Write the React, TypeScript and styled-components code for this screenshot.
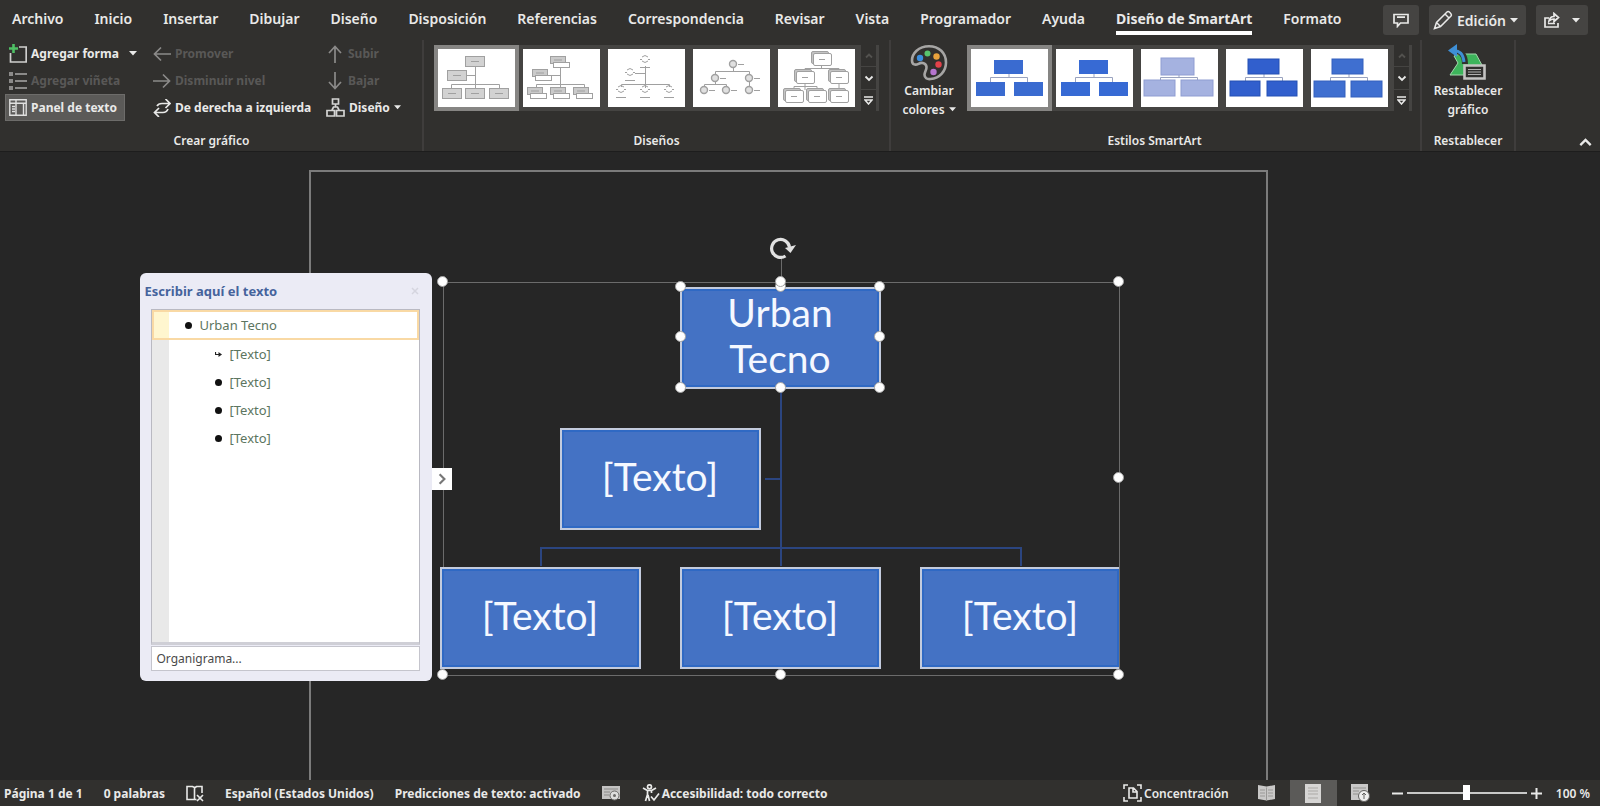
import React from "react";
import styled, { createGlobalStyle, css } from "styled-components";

const c = {
  bar: "#31302e",
  canvas: "#262626",
  text: "#e9e9e8",
  dim: "#595857",
  line: "#3f3d3c",
  blue: "#4472c4",
};

const GlobalStyle = createGlobalStyle`
  *, *::before, *::after { box-sizing: border-box; }
  html, body, #root { height: 100%; }
  body {
    margin: 0;
    background: ${c.canvas};
    color: ${c.text};
    font-family: "Noto Sans", "Open Sans", sans-serif;
    font-size: 13px;
  }
  button, input, select { font: inherit; color: inherit; }
  button { border: 0; background: none; padding: 0; cursor: pointer; }
  ul, h1, h2, h3 { margin: 0; padding: 0; list-style: none; }
  svg { display: block; flex: none; }
`;

const Shell = styled.div`
  min-height: 100vh;
  display: flex;
  flex-direction: column;
`;

/* ---------- Tabs ---------- */

const TabBar = styled.header`
  display: flex;
  align-items: center;
  height: 40px;
  padding: 0 12px;
  background: ${c.bar};
`;

const Tabs = styled.nav`
  display: flex;
  gap: 31px;
`;

const Tab = styled.a<{ $active?: boolean }>`
  padding: 4px 0 2px;
  border-bottom: 4px solid ${(p) => (p.$active ? "#ffffff" : "transparent")};
  color: ${c.text};
  font-size: 14px;
  font-weight: ${(p) => (p.$active ? 700 : 600)};
  line-height: 20px;
  text-decoration: none;
  white-space: nowrap;
`;

const Actions = styled.div`
  display: flex;
  gap: 10px;
  margin-left: auto;
`;

const ActionButton = styled.button<{ $split?: boolean }>`
  display: flex;
  align-items: center;
  justify-content: center;
  gap: ${(p) => (p.$split ? "12px" : "4px")};
  height: 30px;
  min-width: 36px;
  padding: 0 8px 0 ${(p) => (p.$split ? "8px" : "4px")};
  border-radius: 3px;
  background: #454442;
  font-size: 14px;
  font-weight: 600;
`;

/* ---------- Ribbon ---------- */

const Ribbon = styled.section`
  display: flex;
  position: relative;
  height: 112px;
  background: ${c.bar};
  border-bottom: 1px solid #1d1d1d;
`;

const Group = styled.section<{ $pad?: string }>`
  display: flex;
  flex-direction: column;
  justify-content: space-between;
  padding: ${(p) => p.$pad || "0 12px"};
  border-right: 2px solid ${c.line};
`;

const GroupLabel = styled.h2`
  font-size: 12px;
  font-weight: 600;
  line-height: 20px;
  text-align: center;
`;

const GroupBody = styled.div`
  display: flex;
  gap: 6px;
  height: 81px;
`;

const Commands = styled.div`
  display: grid;
  grid-template-columns: 144px 173px 96px;
  grid-template-rows: repeat(3, 27px);
  justify-items: start;
`;

const Command = styled.button<{ $on?: boolean }>`
  display: flex;
  align-items: center;
  gap: 4px;
  height: 27px;
  padding: 0 4px;
  font-size: 12px;
  font-weight: 700;
  white-space: nowrap;
  &:disabled { color: ${c.dim}; }
  &:disabled svg { color: #8b8a89; }
  ${(p) => p.$on && css`
    padding-right: 8px;
    background: #5b5a58;
    outline: 1px solid #6d6c6a;
    outline-offset: -1px;
  `}
`;

const MenuArrow = styled.span`
  margin-left: 6px;
`;

const Tall = styled.button`
  display: flex;
  flex-direction: column;
  align-items: center;
  width: 64px;
  padding-top: 4px;
  font-size: 12px;
  font-weight: 600;
  line-height: 19px;
`;

const ResetButton = styled(Tall)`
  width: 72px;
`;

const TallLine = styled.span`
  display: flex;
  align-items: center;
  gap: 4px;
`;

const Gallery = styled.div`
  display: flex;
  align-self: flex-start;
  margin-top: 5px;
  padding-right: 3px;
  background: #454442;
`;

const Thumb = styled.button<{ $on?: boolean }>`
  display: flex;
  padding: 4px;
  background: ${(p) => (p.$on ? "#868583" : "transparent")};
  & > svg { background: #fff; }
`;

const Scrollers = styled.div`
  display: flex;
  flex-direction: column;
  gap: 1px;
  margin-left: 2px;
`;

const Scroller = styled.button`
  display: flex;
  align-items: center;
  justify-content: center;
  width: 15px;
  flex: 1;
  background: #31302e;
  &:disabled { color: #53524f; }
`;

const Collapse = styled.button`
  align-self: flex-end;
  margin: 0 8px 2px auto;
`;

/* ---------- Document ---------- */

const Workspace = styled.main`
  flex: 1;
  display: flex;
  justify-content: center;
  padding: 18px 24px 0 0;
  overflow: hidden;
`;

const Page = styled.div`
  position: relative;
  width: 959px;
  border: 2px solid #7b7b7b;
  border-bottom: 0;
`;

const Diagram = styled.div`
  position: absolute;
  left: 132px;
  top: 110px;
  width: 677px;
  height: 394px;
  border: 1px solid #6b6b6b;
`;

const Links = styled.svg`
  position: absolute;
  inset: -1px;
`;

const NodeArea = styled.div`
  position: absolute;
  inset: -2px 0 -2px -4px;
  overflow: hidden;
`;

const Node = styled.div<{ $x: number; $y: number }>`
  position: absolute;
  left: ${(p) => p.$x}px;
  top: ${(p) => p.$y}px;
  display: flex;
  align-items: center;
  justify-content: center;
  width: 201px;
  height: 102px;
  padding: 0 40px 6px;
  border: 2px solid #c3cbdd;
  background: ${c.blue};
  box-shadow: inset 0 0 0 2px #2f69c4;
  color: #f5f8ff;
  font-family: Lato, sans-serif;
  font-size: 39px;
  line-height: 46px;
  text-align: center;
`;

const Handle = styled.span<{ $x: number; $y: number }>`
  position: absolute;
  left: ${(p) => p.$x}px;
  top: ${(p) => p.$y}px;
  width: 11px;
  height: 11px;
  margin: -7px 0 0 -7px;
  border: 1px solid #a2a2a2;
  border-radius: 50%;
  background: #fff;
`;

const Rotate = styled.svg`
  position: absolute;
  left: 321px;
  top: -48px;
`;

/* ---------- Text pane ---------- */

const Pane = styled.aside`
  position: absolute;
  left: -171px;
  top: 101px;
  display: flex;
  flex-direction: column;
  width: 292px;
  height: 408px;
  padding: 0 12px 10px 11px;
  border-radius: 6px;
  background: #ebebf5;
`;

const PaneHead = styled.div`
  display: flex;
  align-items: center;
  justify-content: space-between;
  height: 36px;
  margin-left: -6px;
  color: #45639c;
`;

const PaneTitle = styled.h2`
  font-size: 13px;
  font-weight: 700;
  line-height: 20px;
`;

const Outline = styled.ul`
  flex: 1;
  border: 1px solid #b9b9c2;
  border-bottom-width: 3px;
  border-bottom-color: #cfcfd6;
  background: linear-gradient(to right, #e9e9e9 17px, #ffffff 17px);
`;

const OutlineItem = styled.li<{ $on?: boolean }>`
  display: flex;
  align-items: center;
  gap: 8px;
  height: 28px;
  padding-left: 63px;
  color: #5c7560;
  font-size: 13px;
  ${(p) => p.$on && css`
    height: 30px;
    padding-left: 31px;
    border: 2px solid #f9d9a4;
    background: linear-gradient(to right, #fff6cf 15px, #ffffff 15px);
  `}
`;

const Dot = styled.span`
  width: 7px;
  height: 7px;
  border-radius: 50%;
  background: #111;
`;

const LayoutName = styled.a`
  height: 25px;
  margin-top: 1px;
  padding: 0 5px;
  border: 1px solid #c5c5cd;
  background: #fff;
  color: #4a4a4a;
  font-size: 12px;
  line-height: 23px;
  text-decoration: none;
`;

const PaneToggle = styled.button`
  position: absolute;
  left: 121px;
  top: 296px;
  display: flex;
  align-items: center;
  justify-content: center;
  width: 20px;
  height: 22px;
  background: #fff;
  color: #777;
`;

/* ---------- Status bar ---------- */

const StatusBar = styled.footer`
  display: flex;
  align-items: center;
  height: 26px;
  padding: 0 10px 0 4px;
  background: ${c.bar};
  font-size: 12px;
  font-weight: 600;
  white-space: nowrap;
`;

const StatusLeft = styled.div`
  display: flex;
  align-items: center;
  gap: 21px;
  font-weight: 700;
`;

const StatusRight = styled.div`
  display: flex;
  align-items: center;
  margin-left: auto;
`;

const StatusButton = styled.button`
  display: flex;
  align-items: center;
  gap: 2px;
  height: 26px;
`;

const ViewButton = styled.button<{ $on?: boolean }>`
  display: flex;
  align-items: center;
  justify-content: center;
  width: 47px;
  height: 26px;
  background: ${(p) => (p.$on ? "#5b5a58" : "transparent")};
`;

const Focus = styled(StatusButton)`
  margin-right: 14px;
`;

const Zoom = styled.div`
  display: flex;
  align-items: center;
  gap: 4px;
  margin-left: 8px;
`;

const Slider = styled.input`
  width: 120px;
  height: 16px;
  margin: 0;
  appearance: none;
  background: transparent;
  &::-webkit-slider-runnable-track { height: 2px; background: #c9c9c8; }
  &::-webkit-slider-thumb {
    appearance: none;
    width: 7px;
    height: 15px;
    margin-top: -7px;
    background: #fff;
  }
`;

const Percent = styled.span`
  margin-left: 14px;
`;

/* ---------- Icons ---------- */

const Caret = ({ w = 8 }: { w?: number }) => (
  <svg width={w} height="5" viewBox="0 0 8 5" fill="currentColor"><path d="M0 0h8L4 4.6z" /></svg>
);

const Chevron = ({ d, size = 10 }: { d: string; size?: number }) => (
  <svg width={size} height={size} viewBox="0 0 10 10" fill="none" stroke="currentColor" strokeWidth="1.8"><path d={d} /></svg>
);

const Stroke = ({ d, w = 18, h = 18 }: { d: string; w?: number; h?: number }) => (
  <svg width={w} height={h} viewBox={`0 0 ${w} ${h}`} fill="none" stroke="currentColor" strokeWidth="1.7"><path d={d} /></svg>
);

const AddShapeIcon = () => (
  <svg width="18" height="20" viewBox="0 0 18 20" fill="none">
    <path d="M10 3h7.2v15H1.5V9" stroke="#cfcfce" strokeWidth="1.7" />
    <path d="M4.5 0v9M0 4.5h9" stroke="#4fc065" strokeWidth="2.6" />
  </svg>
);

const BulletIcon = () => (
  <svg width="18" height="18" viewBox="0 0 18 18" fill="currentColor">
    <path d="M0 0h4v4H0zM0 7h4v4H0zM0 14h4v4H0zM6 1h12v2H6zM6 8h12v2H6zM6 15h12v2H6z" />
  </svg>
);

const PaneIcon = () => (
  <svg width="18" height="17" viewBox="0 0 18 17" fill="none" stroke="#e0e0df" strokeWidth="1.4">
    <path d="M.8.8h16.4v15.4H.8zM7 1v15M1 4.2h16M3 7.5h3M3 10h3M3 12.5h3M14.5 5v11" />
  </svg>
);

const OrgIcon = () => (
  <svg width="19" height="19" viewBox="0 0 19 19" fill="none" stroke="#d5d5d4" strokeWidth="1.7">
    <path d="M6.5 1h6v5h-6zM9.5 6v3M6 12l1.5-3h4L13 12M1 12.5h7.5V18H1zM10.5 12.5H18V18h-7.5z" />
  </svg>
);

const PaletteIcon = () => (
  <svg width="38" height="37" viewBox="0 0 38 37" fill="none">
    <path d="M19 2.2C8.5 2.2 2 9.5 2 16.5c0 4.5 3.5 4.8 6.5 3.3 3.5-1.7 7.5-1 8 3 .3 3-2 5-2 8 0 3 2.5 4.7 6 4.2C30 34 36 27 36 18.5 36 9 29 2.2 19 2.2z" stroke="#a6a5a4" strokeWidth="2.6" />
    <circle cx="10" cy="14" r="3.2" fill="#3b8ede" />
    <circle cx="17.5" cy="9.5" r="3" fill="#58c46e" />
    <circle cx="26.5" cy="12.5" r="3.2" fill="#e9a33c" />
    <circle cx="28.5" cy="20.5" r="3.2" fill="#e2414a" />
    <circle cx="23.5" cy="28" r="3.2" fill="#b675cf" />
  </svg>
);

const ResetIcon = () => (
  <svg width="40" height="37" viewBox="0 0 40 37" fill="none">
    <path d="M12 10h16l7 13v8H2l8-12-4-7z" fill="#3db45b" stroke="#a4d8ae" strokeWidth="1" />
    <path d="M5 7c8-1 12 4 12 13" stroke="#31302e" strokeWidth="6" />
    <path d="M4 7c8-1 11 3 12 11" stroke="#3e8fd6" strokeWidth="3" />
    <path d="M9 0v13L0 6.5z" fill="#3e8fd6" />
    <path d="M16.5 21.5h20v13h-20z" fill="#31302e" stroke="#c4c3c2" strokeWidth="2.6" />
    <path d="M20 25.5h13M20 28h13M20 30.5h13" stroke="#b0afae" strokeWidth="1.2" />
  </svg>
);

const CommentIcon = () => (
  <svg width="16" height="15" viewBox="0 0 16 15" fill="none" stroke="currentColor" strokeWidth="1.7">
    <path d="M1 1.5h14v8.5H7.5L4.5 13.3V10H1zM4 4.2h8" />
  </svg>
);

const PencilIcon = () => (
  <svg width="20" height="20" viewBox="0 0 20 20" fill="none" stroke="currentColor" strokeWidth="1.5">
    <path d="M1.5 18.5l2-6L14 2c1.5-1.5 5.5 2 4 4L7.5 16.5zM12 4l4 4M3.5 12.5l4 4" />
  </svg>
);

const ShareIcon = () => (
  <svg width="16" height="16" viewBox="0 0 16 16" fill="none" stroke="currentColor" strokeWidth="1.7">
    <path d="M5 6H1v9h13v-4M4 11.5h7M5 9c.5-3 2-4.5 5-4.5V1.5l4.500 4-4.500 4V7C8 7 6.500 7.500 5 9z" />
  </svg>
);

const MoreIcon = () => (
  <svg width="9" height="9" viewBox="0 0 9 9" fill="none" stroke="currentColor" strokeWidth="1.5">
    <path d="M0 1h9M1 4h7L4.5 8z" />
  </svg>
);

const ProofIcon = () => (
  <svg width="18" height="17" viewBox="0 0 18 17" fill="none" stroke="currentColor" strokeWidth="1.6">
    <path d="M8.5 2.5v12H1v-13h5.5zM8.5 3l2-1.5H16V8M8.5 14.5h2M11 10l6 6M17 10l-6 6" />
  </svg>
);

const MacroIcon = () => (
  <svg width="19" height="17" viewBox="0 0 19 17">
    <path d="M0 1h18v13H0z" fill="#c4c3c2" />
    <path d="M2 4h14M2 7h6M2 10h5" stroke="#8b8a88" />
    <circle cx="12.5" cy="10.5" r="4.5" fill="#dededd" stroke="#6b6a68" />
    <circle cx="12.5" cy="10.5" r="1.5" fill="#6b6a68" />
  </svg>
);

const AccessIcon = () => (
  <svg width="18" height="18" viewBox="0 0 18 18" fill="none" stroke="currentColor" strokeWidth="1.7">
    <circle cx="7.5" cy="2.8" r="2" />
    <path d="M1 4l4.5 2.5v4L3.5 17M14 4L9.5 6.5V9M5.5 6.5h4M6 11l1.5 6M9 12.5l3 3.5 5-6.5" />
  </svg>
);

const FocusIcon = () => (
  <svg width="19" height="18" viewBox="0 0 19 18" fill="none" stroke="currentColor" strokeWidth="1.6">
    <path d="M1 5V1h4M14 1h4v4M18 13v4h-4M5 17H1v-4M6 4h4.5L14 7.5V14H6zM10 4v4h4" />
  </svg>
);

const ReadIcon = () => (
  <svg width="17" height="16" viewBox="0 0 17 16">
    <path d="M0 0l8.5 1.5L17 0v14l-8.5 1.5L0 14z" fill="#c9c8c7" />
    <path d="M8.5 2.5v13M2 5h5M2 8h5M2 11h5M10 5h5M10 8h5M10 11h5" stroke="#9a9997" />
  </svg>
);

const PrintIcon = () => (
  <svg width="16" height="19" viewBox="0 0 16 19">
    <path d="M0 0h16v19H0z" fill="#d6d5d4" />
    <path d="M3 4h10M3 7h10M3 10h10M3 14h10" stroke="#aba9a6" />
  </svg>
);

const WebIcon = () => (
  <svg width="19" height="18" viewBox="0 0 19 18">
    <path d="M0 0h17v16H0z" fill="#c9c8c7" />
    <path d="M2 4h13M2 7h6M2 10h5" stroke="#93928f" />
    <circle cx="13" cy="12" r="5.5" fill="#efefee" stroke="#62615f" />
    <path d="M13 9v6M11 11l2-2 2 2" stroke="#62615f" fill="none" />
  </svg>
);

/* ---------- Gallery thumbnails ---------- */

type XY = [number, number];

const Art = ({ children }: { children: React.ReactNode }) => (
  <svg width="77" height="58" viewBox="0 0 77 58" fill="none" stroke="#a0a0a0" strokeWidth="1">{children}</svg>
);

const tree = "M37.5 17v22M29 26.5h8.5M13.5 39v-3.5h48V39";

const LayoutArts = [
  <Art key="a">
    <path d={tree} />
    {([[27, 7], [9, 21], [4, 39], [27, 39], [51, 39]] as XY[]).map(([x, y]) => (
      <g key={`${x}-${y}`}>
        <rect x={x + 0.5} y={y + 0.5} width="19" height="10" fill="#d2d2d2" />
        <path d={`M${x + 6} ${y + 5.5}h8`} />
      </g>
    ))}
  </Art>,
  <Art key="b">
    <path d={tree} />
    {([[27, 7], [9, 20], [4, 38], [27, 38], [50, 38]] as XY[]).map(([x, y]) => (
      <g key={`${x}-${y}`}>
        <rect x={x + 0.5} y={y + 0.5} width="15" height="7" fill="#cacaca" />
        <path d={`M${x + 4} ${y + 4}h8`} />
        <rect x={x + 3.5} y={y + 6.5} width="16" height="5" fill="#fff" />
      </g>
    ))}
  </Art>,
  <Art key="c">
    <path d="M37.5 17v22M27 24.5h10.5M13.5 38v-2.5h48V38" />
    {([[37, 7], [22, 20], [13, 37], [37, 37], [61, 37]] as XY[]).map(([x, y]) => (
      <path key={`${x}-${y}`} d={`M${x - 3} ${y + 1}q3-3 6 0M${x - 3} ${y + 5}q3 3 6 0M${x - 5} ${y + 3.5}h2M${x + 3} ${y + 3.5}h2M${x - 5} ${y + 11.5}h10`} />
    ))}
  </Art>,
  <Art key="d">
    <path d="M40.5 19v3.5M22.5 26v-3.5h34V26M22.5 33v3M11.5 38v-2.5h22V38M56.5 33v5" />
    {([[40, 15], [22, 29], [56, 29], [11, 41], [33, 41], [56, 41]] as XY[]).map(([x, y]) => (
      <g key={`${x}-${y}`}>
        <circle cx={x} cy={y} r="3.5" fill="#e0e0e0" strokeWidth="1.4" />
        <path d={`M${x + 5} ${y + 0.5}h6`} />
      </g>
    ))}
  </Art>,
  <Art key="e">
    <path d="M43.5 17v3M27 22v-2.5h34V22M27 35v6M16 41v-3.5h23V41M61 35v6" />
    {([[34, 4], [17, 22], [51, 22], [6, 41], [29, 41], [51, 41]] as XY[]).map(([x, y]) => (
      <g key={`${x}-${y}`}>
        <rect x={x - 0.5} y={y - 1.5} width="17" height="12" rx="1.5" fill="#c4c4c4" />
        <rect x={x + 1.5} y={y + 0.5} width="18" height="12" rx="1.5" fill="#fff" />
        <path d={`M${x + 7} ${y + 6.5}h6`} />
      </g>
    ))}
  </Art>,
];

const styleSpecs = [
  { fill: "#3a6bd0", edge: "none", boxes: [[23, 11, 29, 14], [5, 33, 29, 14], [43, 33, 29, 14]] },
  { fill: "#376ad4", edge: "none", boxes: [[23, 11, 29, 14], [5, 33, 29, 14], [43, 33, 29, 14]] },
  { fill: "#a5b2e0", edge: "#8f9dd2", boxes: [[20, 9, 33, 17], [3, 31, 31, 16], [40, 31, 32, 16]] },
  { fill: "#315fcd", edge: "#2450b4", boxes: [[22, 10, 31, 15], [4, 32, 30, 15], [41, 32, 30, 15]] },
  { fill: "#3f6fd0", edge: "#3560bd", boxes: [[21, 10, 31, 15], [3, 32, 31, 16], [40, 32, 31, 16]] },
];

const StyleArts = styleSpecs.map((s, i) => (
  <Art key={i}>
    <path d="M38 25v4M19.5 33v-4.5h37V33" stroke="#9aa3bf" />
    {s.boxes.map(([x, y, w, h]) => (
      <rect key={x} x={x} y={y} width={w} height={h} fill={s.fill} stroke={s.edge} />
    ))}
  </Art>
));

const GalleryList = ({ arts, label }: { arts: React.ReactNode[]; label: string }) => (
  <Gallery role="group" aria-label={label}>
    {arts.map((art, i) => (
      <Thumb key={i} $on={i === 0} aria-label={`${label} ${i + 1}`}>{art}</Thumb>
    ))}
    <Scrollers>
      <Scroller disabled aria-label="Fila anterior"><Chevron d="M2 6.5l3-3 3 3" /></Scroller>
      <Scroller aria-label="Fila siguiente"><Chevron d="M1.5 3.5L5 7l3.5-3.5" /></Scroller>
      <Scroller aria-label="Más"><MoreIcon /></Scroller>
    </Scrollers>
  </Gallery>
);

/* ---------- App ---------- */

const tabs = [
  "Archivo", "Inicio", "Insertar", "Dibujar", "Diseño", "Disposición", "Referencias",
  "Correspondencia", "Revisar", "Vista", "Programador", "Ayuda", "Diseño de SmartArt", "Formato",
];

const nodes: { x: number; y: number; text: string }[] = [
  { x: 240, y: 6, text: "Urban Tecno" },
  { x: 120, y: 147, text: "[Texto]" },
  { x: 0, y: 286, text: "[Texto]" },
  { x: 240, y: 286, text: "[Texto]" },
  { x: 480, y: 286, text: "[Texto]" },
];

const frameHandles: XY[] = [[0, 0], [676, 0], [676, 196], [0, 393], [338, 393], [676, 393]];
const nodeHandles: XY[] = [[238, 5], [338, 5], [437, 5], [238, 55], [437, 55], [238, 106], [338, 106], [437, 106], [338, 0]];

export default function App() {
  return (
    <Shell>
      <GlobalStyle />
      <TabBar>
        <Tabs aria-label="Pestañas">
          {tabs.map((t) => (
            <Tab key={t} href="#" $active={t === "Diseño de SmartArt"}>{t}</Tab>
          ))}
        </Tabs>
        <Actions>
          <ActionButton $split aria-label="Comentarios"><CommentIcon /></ActionButton>
          <ActionButton><PencilIcon />Edición<Caret /></ActionButton>
          <ActionButton $split aria-label="Compartir"><ShareIcon /><Caret /></ActionButton>
        </Actions>
      </TabBar>

      <Ribbon>
        <Group $pad="0 4px 0 5px">
          <GroupBody>
            <Commands>
              <Command><AddShapeIcon />Agregar forma<MenuArrow><Caret /></MenuArrow></Command>
              <Command disabled><Stroke d="M18 9H2M8 2.5L1.5 9 8 15.5" />Promover</Command>
              <Command disabled><Stroke d="M9 18V2M3 8l6-6.5L15 8" />Subir</Command>
              <Command disabled><BulletIcon />Agregar viñeta</Command>
              <Command disabled><Stroke d="M0 9h16M10 2.5L16.5 9 10 15.5" />Disminuir nivel</Command>
              <Command disabled><Stroke d="M9 0v16M3 10l6 6.5 6-6.5" />Bajar</Command>
              <Command $on aria-pressed><PaneIcon />Panel de texto</Command>
              <Command><Stroke d="M4 7c1-2 2-2.5 5-2.5h8M12.5 0L17 4.5 12.5 9M15 10c-1 2.5-2 3.5-5 3.5H1.5M6 9l-4.5 4.5L6 18" />De derecha a izquierda</Command>
              <Command><OrgIcon />Diseño<Caret w={7} /></Command>
            </Commands>
          </GroupBody>
          <GroupLabel>Crear gráfico</GroupLabel>
        </Group>

        <Group $pad="0 10px">
          <GroupBody><GalleryList arts={LayoutArts} label="Diseños" /></GroupBody>
          <GroupLabel>Diseños</GroupLabel>
        </Group>

        <Group $pad="0 8px 0 6px">
          <GroupBody>
            <Tall>
              <PaletteIcon />
              <TallLine>Cambiar</TallLine>
              <TallLine>colores <Caret w={7} /></TallLine>
            </Tall>
            <GalleryList arts={StyleArts} label="Estilos SmartArt" />
          </GroupBody>
          <GroupLabel>Estilos SmartArt</GroupLabel>
        </Group>

        <Group $pad="0 10px">
          <GroupBody>
            <ResetButton>
              <ResetIcon />
              <TallLine>Restablecer</TallLine>
              <TallLine>gráfico</TallLine>
            </ResetButton>
          </GroupBody>
          <GroupLabel>Restablecer</GroupLabel>
        </Group>

        <Collapse aria-label="Contraer la cinta"><Chevron size={13} d="M1 7l4-4 4 4" /></Collapse>
      </Ribbon>

      <Workspace>
        <Page>
          <Diagram>
            <Links width="677" height="394" fill="none" stroke="#2b4580" strokeWidth="2">
              <path d="M338 106v178M322 197h16M98 284v-18h480v18" />
            </Links>
            <NodeArea>
              {nodes.map((n) => (
                <Node key={`${n.x}-${n.y}`} $x={n.x} $y={n.y}>{n.text}</Node>
              ))}
            </NodeArea>
            <Rotate width="32" height="48" viewBox="0 0 32 48" fill="none">
              <path d="M16.5 23v24" stroke="#6b6b6b" />
              <path d="M20.5 21A9 9 0 1 1 24.5 12" stroke="#e2e2e2" strokeWidth="3.2" />
              <path d="M20 13l11-3-5.500 8z" fill="#e2e2e2" />
            </Rotate>
            {[...nodeHandles, ...frameHandles].map(([x, y]) => (
              <Handle key={`${x}-${y}`} $x={x} $y={y} />
            ))}
          </Diagram>

          <Pane aria-label="Panel de texto">
            <PaneHead>
              <PaneTitle>Escribir aquí el texto</PaneTitle>
              <button aria-label="Cerrar">
                <svg width="10" height="10" viewBox="0 0 10 10" stroke="#d5d5df" strokeWidth="1.5"><path d="M2 2l6 6M8 2L2 8" /></svg>
              </button>
            </PaneHead>
            <Outline>
              <OutlineItem $on><Dot />Urban Tecno</OutlineItem>
              <OutlineItem>
                <svg width="7" height="7" viewBox="0 0 7 7" fill="none" stroke="#222" strokeWidth="1.2"><path d="M.5 1v2.5H5" /><path d="M3.5 1L7 3.5 3.5 6z" fill="#222" stroke="none" /></svg>
                [Texto]
              </OutlineItem>
              <OutlineItem><Dot />[Texto]</OutlineItem>
              <OutlineItem><Dot />[Texto]</OutlineItem>
              <OutlineItem><Dot />[Texto]</OutlineItem>
            </Outline>
            <LayoutName href="#">Organigrama...</LayoutName>
          </Pane>
          <PaneToggle aria-label="Ocultar panel"><Chevron size={12} d="M3 1l4 4-4 4" /></PaneToggle>
        </Page>
      </Workspace>

      <StatusBar>
        <StatusLeft>
          <StatusButton>Página 1 de 1</StatusButton>
          <StatusButton>0 palabras</StatusButton>
          <StatusButton aria-label="Revisión"><ProofIcon /></StatusButton>
          <StatusButton>Español (Estados Unidos)</StatusButton>
          <StatusButton>Predicciones de texto: activado</StatusButton>
          <StatusButton aria-label="Macros"><MacroIcon /></StatusButton>
          <StatusButton><AccessIcon />Accesibilidad: todo correcto</StatusButton>
        </StatusLeft>
        <StatusRight>
          <Focus><FocusIcon />Concentración</Focus>
          <ViewButton aria-label="Modo de lectura"><ReadIcon /></ViewButton>
          <ViewButton $on aria-label="Diseño de impresión"><PrintIcon /></ViewButton>
          <ViewButton aria-label="Diseño web"><WebIcon /></ViewButton>
          <Zoom>
            <button aria-label="Alejar"><svg width="11" height="11" stroke="currentColor" strokeWidth="2"><path d="M0 5.5h11" /></svg></button>
            <Slider type="range" aria-label="Zoom" min={0} max={200} defaultValue={100} />
            <button aria-label="Acercar"><svg width="11" height="11" stroke="currentColor" strokeWidth="2"><path d="M0 5.5h11M5.5 0v11" /></svg></button>
          </Zoom>
          <Percent>100 %</Percent>
        </StatusRight>
      </StatusBar>
    </Shell>
  );
}
